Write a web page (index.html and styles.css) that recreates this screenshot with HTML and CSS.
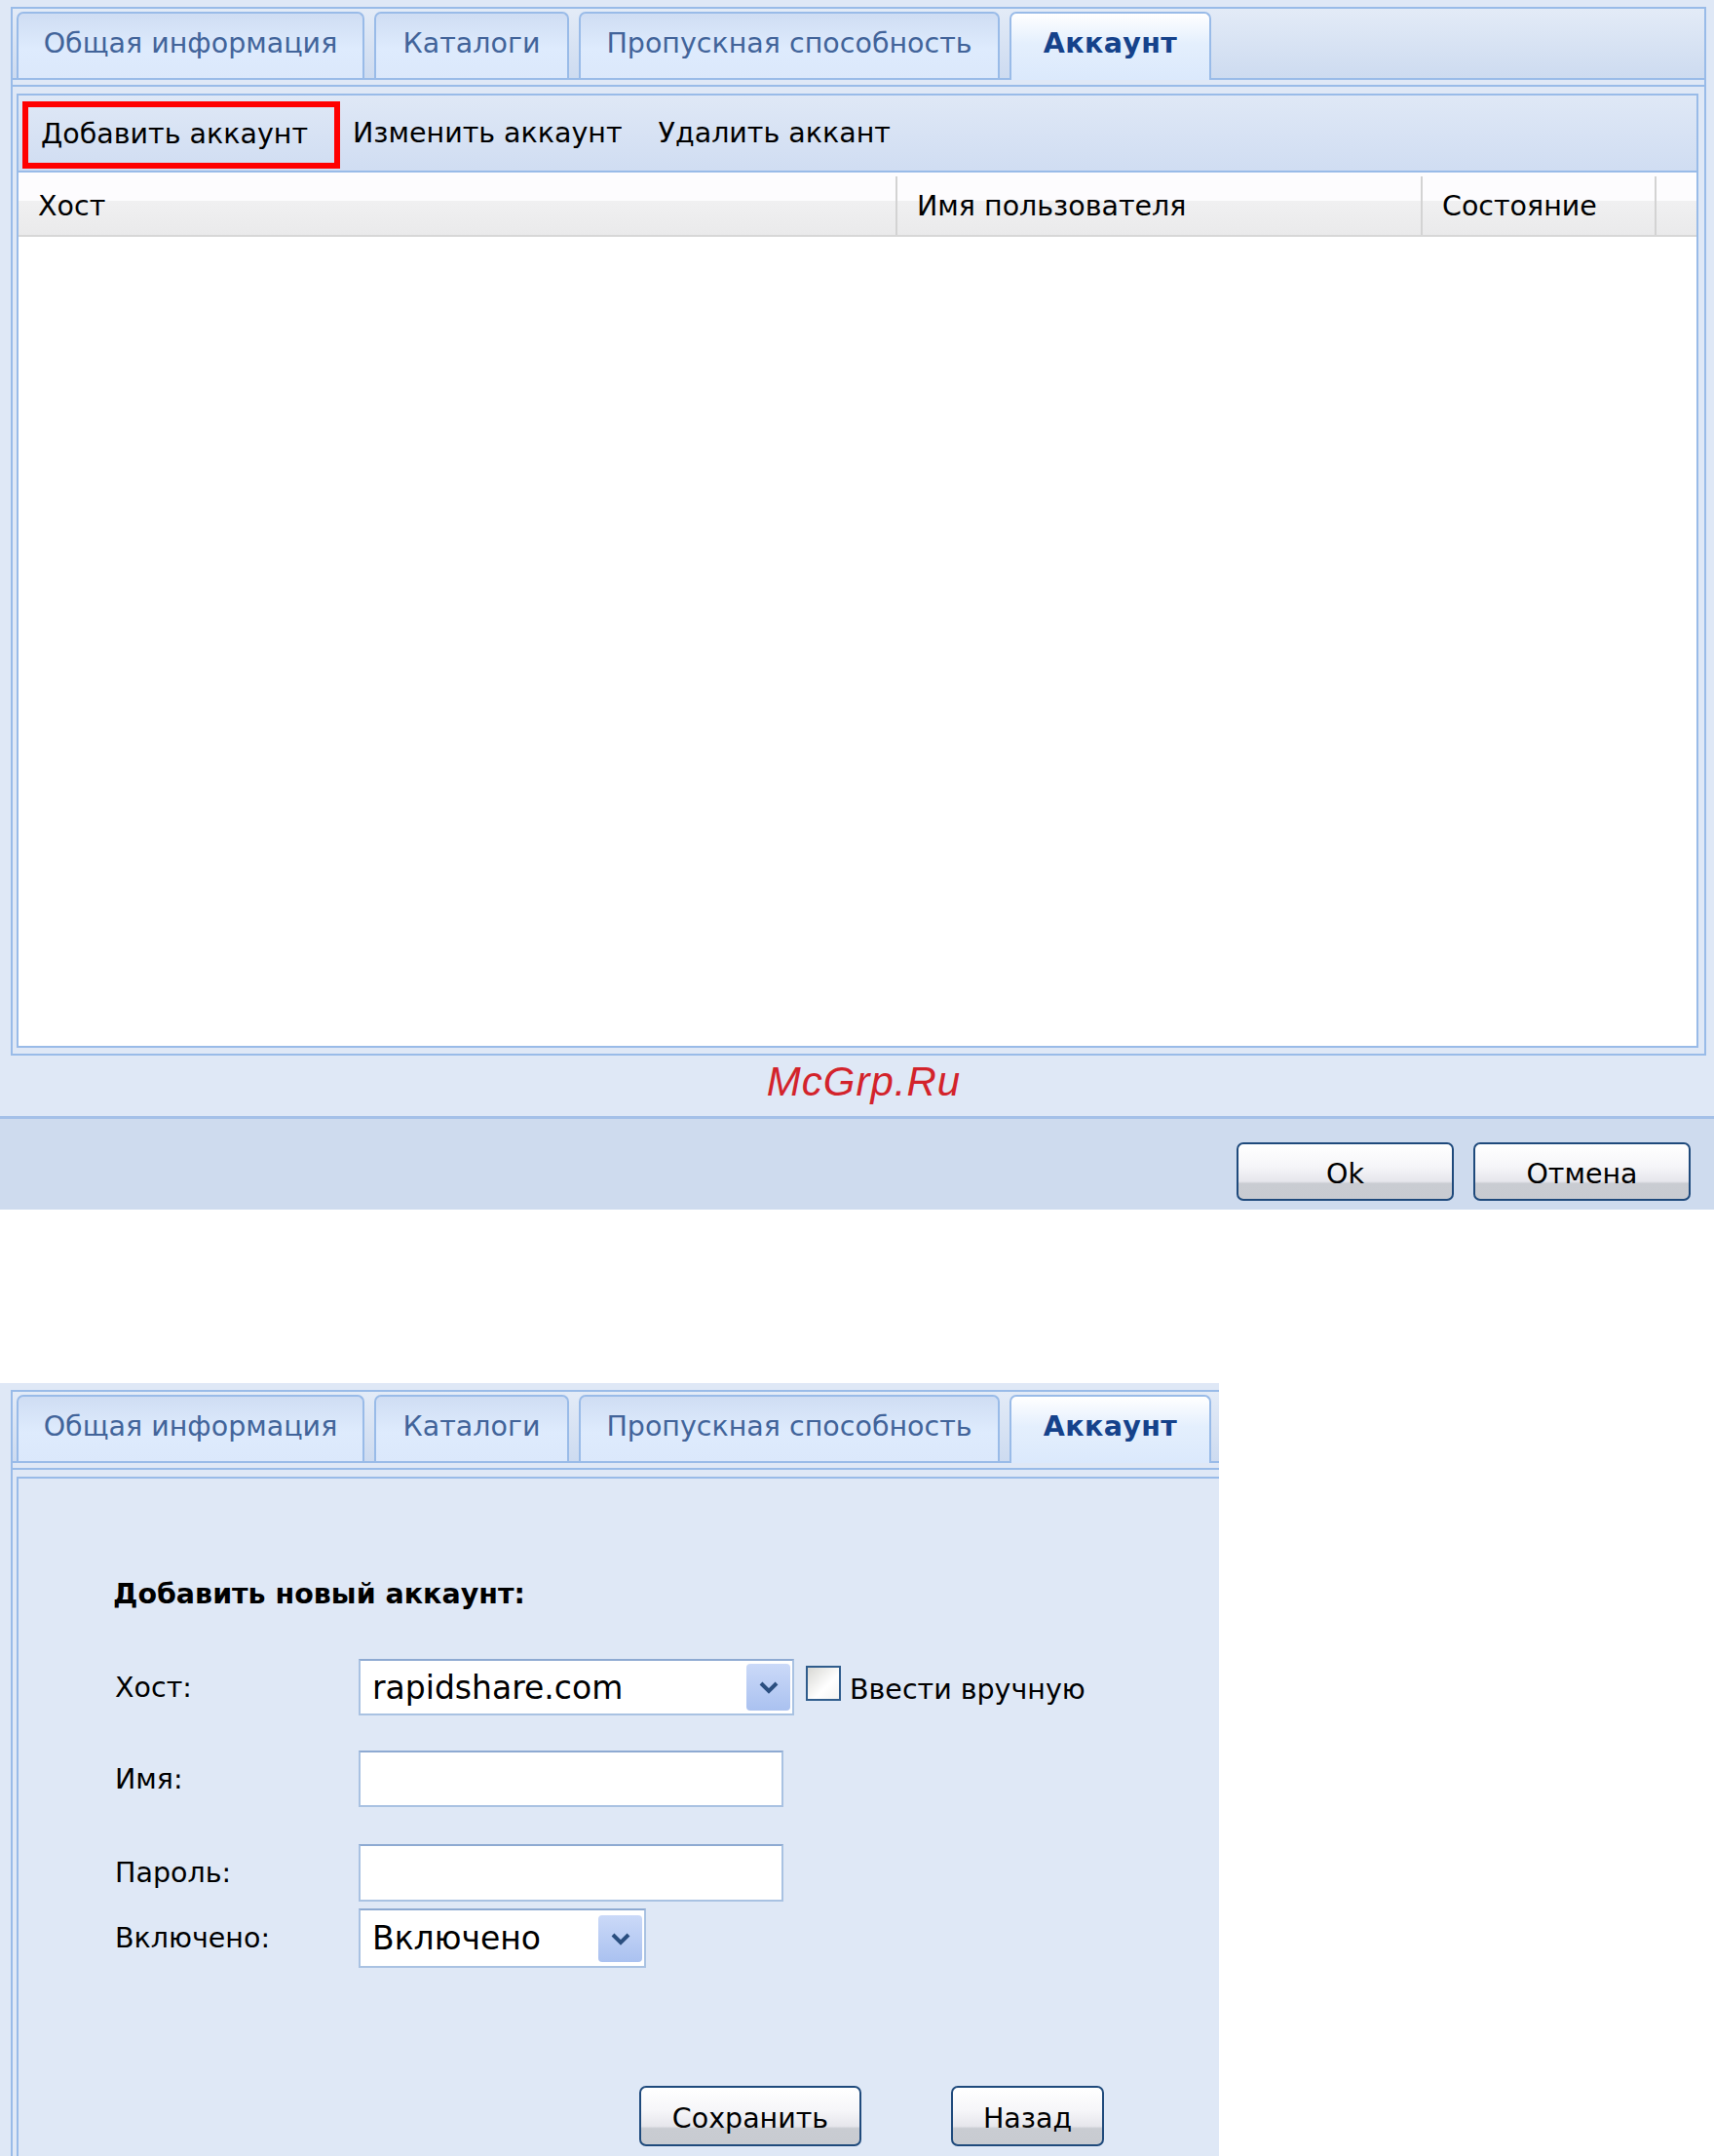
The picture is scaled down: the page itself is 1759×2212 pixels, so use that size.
FILE: index.html
```html
<!DOCTYPE html>
<html lang="ru">
<head>
  <meta charset="UTF-8">
  <title>Аккаунт</title>
  <link rel="stylesheet" href="styles.css">
</head>
<body>

<div class="window win-main">
  <div class="tabpanel">
    <div class="tabstrip">
      <div class="tab t-general">Общая информация</div>
      <div class="tab t-dirs">Каталоги</div>
      <div class="tab t-speed">Пропускная способность</div>
      <div class="tab t-account active">Аккаунт</div>
    </div>
    <div class="tab-spacer"></div>
    <div class="tab-body">
      <div class="grid-panel">
        <div class="toolbar">
          <div class="tb-btn marked">Добавить аккаунт</div>
          <div class="tb-btn">Изменить аккаунт</div>
          <div class="tb-btn">Удалить аккант</div>
        </div>
        <div class="grid-head">
          <div class="col col-host">Хост</div>
          <div class="col col-user">Имя пользователя</div>
          <div class="col col-state">Состояние</div>
          <div class="col col-rest"></div>
        </div>
        <div class="grid-rows"></div>
      </div>
    </div>
  </div>
  <div class="watermark">McGrp.Ru</div>
  <div class="footer">
    <button class="btn btn-ok">Ok</button>
    <button class="btn btn-cancel">Отмена</button>
  </div>
</div>

<div class="window win-form">
  <div class="tabpanel">
    <div class="tabstrip">
      <div class="tab t-general">Общая информация</div>
      <div class="tab t-dirs">Каталоги</div>
      <div class="tab t-speed">Пропускная способность</div>
      <div class="tab t-account active">Аккаунт</div>
    </div>
    <div class="tab-spacer"></div>
    <div class="tab-body">
      <div class="form-panel">
        <div class="form-title">Добавить новый аккаунт:</div>

        <div class="form-row row-host">
          <label class="form-label">Хост:</label>
          <div class="combo combo-host">
            <span class="combo-text">rapidshare.com</span>
            <span class="combo-trigger">
              <svg width="22" height="14" viewBox="0 0 22 14"><path d="M3 3 L11 11 L19 3" fill="none" stroke="#2b4f80" stroke-width="4"/></svg>
            </span>
          </div>
          <span class="check"></span>
          <span class="check-label">Ввести вручную</span>
        </div>

        <div class="form-row row-name">
          <label class="form-label">Имя:</label>
          <div class="field"></div>
        </div>

        <div class="form-row row-pass">
          <label class="form-label">Пароль:</label>
          <div class="field"></div>
        </div>

        <div class="form-row row-enabled">
          <label class="form-label">Включено:</label>
          <div class="combo combo-enabled">
            <span class="combo-text">Включено</span>
            <span class="combo-trigger">
              <svg width="22" height="14" viewBox="0 0 22 14"><path d="M3 3 L11 11 L19 3" fill="none" stroke="#2b4f80" stroke-width="4"/></svg>
            </span>
          </div>
        </div>

        <div class="form-buttons">
          <button class="btn btn-save">Сохранить</button>
          <button class="btn btn-back">Назад</button>
        </div>
      </div>
    </div>
  </div>
</div>

</body>
</html>
```

FILE: styles.css
```css
* {
  box-sizing: border-box;
}

body {
  margin: 0;
  padding: 0;
  background: #ffffff;
  font-family: "DejaVu Sans", "Liberation Sans", sans-serif;
  font-size: 28.5px;
  color: #000;
}

.window {
  background: #dfe8f6;
  overflow: hidden;
}

.win-main {
  width: 1759px;
  height: 1241px;
}

.win-form {
  width: 1251px;
  height: 793px;
  margin-top: 178px;
}

/* tab panel */

.tabpanel {
  width: 1740px;
  margin: 7px 0 0 11px;
  border: 2px solid #99bbe8;
  border-bottom: none;
}

.tabstrip {
  display: flex;
  align-items: flex-end;
  height: 71px;
  padding-left: 4px;
  gap: 10px;
  background: linear-gradient(#e3ebf7, #cddbf0);
}

.tab {
  height: 68px;
  padding-bottom: 5px;
  border: 2px solid #99bbe8;
  border-bottom: none;
  border-radius: 7px 7px 0 0;
  background: linear-gradient(#cfddf3, #deebfd 55%, #dbe8fb);
  color: #42649a;
  display: flex;
  align-items: center;
  justify-content: center;
  white-space: nowrap;
}

.t-general { width: 357px; }
.t-dirs { width: 200px; }
.t-speed { width: 432px; }
.t-account { width: 207px; }

.tab.active {
  height: 70px;
  padding-bottom: 7px;
  margin-bottom: -2px;
  position: relative;
  background: linear-gradient(#ffffff, #e4effd 45%, #dbe9fc);
  color: #15428b;
  font-weight: bold;
  letter-spacing: 0.4px;
}

.tab-spacer {
  height: 9px;
  border-top: 2px solid #99bbe8;
  border-bottom: 2px solid #99bbe8;
  background: #dfe8f6;
}

.tab-body {
  padding: 7px 6px 6px 4px;
  border-left: 2px solid #99bbe8;
  border-right: 2px solid #99bbe8;
  border-bottom: 2px solid #99bbe8;
  margin-left: -2px;
  margin-right: -2px;
}

/* grid */

.grid-panel {
  border: 2px solid #99bbe8;
  height: 979px;
  display: flex;
  flex-direction: column;
  background: #fff;
}

.toolbar {
  height: 79px;
  display: flex;
  align-items: center;
  padding-left: 4px;
  background: linear-gradient(#dfe8f6, #d0ddf2);
  border-bottom: 2px solid #99bbe8;
}

.tb-btn {
  white-space: nowrap;
  padding: 0 24px 0 13px;
}

.tb-btn.marked {
  width: 326px;
  height: 69px;
  margin-top: 4px;
  padding: 0 0 3px 13px;
  border: 6px solid #ff0000;
  display: flex;
  align-items: center;
}

.grid-head {
  display: flex;
  height: 66px;
  padding-top: 4px;
  background: linear-gradient(#fdfcfe 45%, #f0f0f1 46%, #eaeaeb);
  border-bottom: 2px solid #d7d7d7;
}

.col {
  display: flex;
  align-items: center;
  padding-left: 20px;
  border-right: 2px solid #d3d3d3;
  white-space: nowrap;
}

.col-host { width: 902px; }
.col-user { width: 539px; }
.col-state { width: 240px; }
.col-rest { flex: 1; border-right: none; }

.grid-rows {
  flex: 1;
  background: #fff;
}

/* footer */

.watermark {
  height: 62px;
  padding: 0 0 0 14px;
  text-align: center;
  font-family: "Liberation Sans", sans-serif;
  font-style: italic;
  font-size: 42px;
  line-height: 54px;
  color: #d3232b;
  letter-spacing: 1px;
}

.footer {
  height: 96px;
  border-top: 3px solid #a4c0e8;
  background: #cedbee;
  display: flex;
  justify-content: flex-end;
  gap: 20px;
  padding: 24px 24px 0 0;
}

.btn {
  font-family: "DejaVu Sans", "Liberation Sans", sans-serif;
  font-size: 28.5px;
  color: #000;
  height: 60px;
  padding: 4px 0 0;
  border: 2px solid #1f4a7c;
  border-radius: 7px;
  background: linear-gradient(#ffffff, #f6f6f9 40%, #e6e6ec 68%, #c9ccd2 72%, #c8cbd1);
}

.btn-ok,
.btn-cancel {
  width: 223px;
}

/* add account form */

.form-panel {
  height: 800px;
  border-top: 2px solid #99bbe8;
  border-left: 2px solid #99bbe8;
  padding: 101px 0 0 97px;
}

.form-title {
  font-weight: bold;
  line-height: 36px;
  height: 36px;
}

.form-row {
  display: flex;
  align-items: center;
}

.form-label {
  width: 252px;
  padding-left: 2px;
  flex: none;
}

.row-host { margin-top: 48px; height: 58px; }
.row-name { margin-top: 36px; height: 58px; }
.row-pass { margin-top: 38px; height: 59px; }
.row-enabled { margin-top: 7px; height: 61px; }

.combo,
.field {
  background: #fff;
  border: 2px solid #a9c2e2;
  border-top-color: #8eaad2;
  height: 100%;
}

.combo {
  display: flex;
  align-items: center;
  justify-content: space-between;
  padding: 0 2px 0 12px;
  font-size: 33px;
}

.combo-host { width: 447px; }
.combo-enabled { width: 295px; }
.field { width: 436px; }

.combo-trigger {
  width: 45px;
  height: 48px;
  border-radius: 4px;
  background: linear-gradient(#cbd9f8, #aac1f0);
  display: flex;
  align-items: center;
  justify-content: center;
}

.check {
  width: 36px;
  height: 36px;
  margin: 0 9px 8px 12px;
  border: 2px solid #2f5c8c;
  background: linear-gradient(135deg, #d8d8d4, #ffffff 60%, #f4f4f2);
}

.check-label {
  white-space: nowrap;
  padding-top: 4px;
}

.form-buttons {
  display: flex;
  gap: 92px;
  margin: 121px 0 0 540px;
}

.btn-save { width: 228px; height: 62px; }
.btn-back { width: 157px; height: 62px; }
```
